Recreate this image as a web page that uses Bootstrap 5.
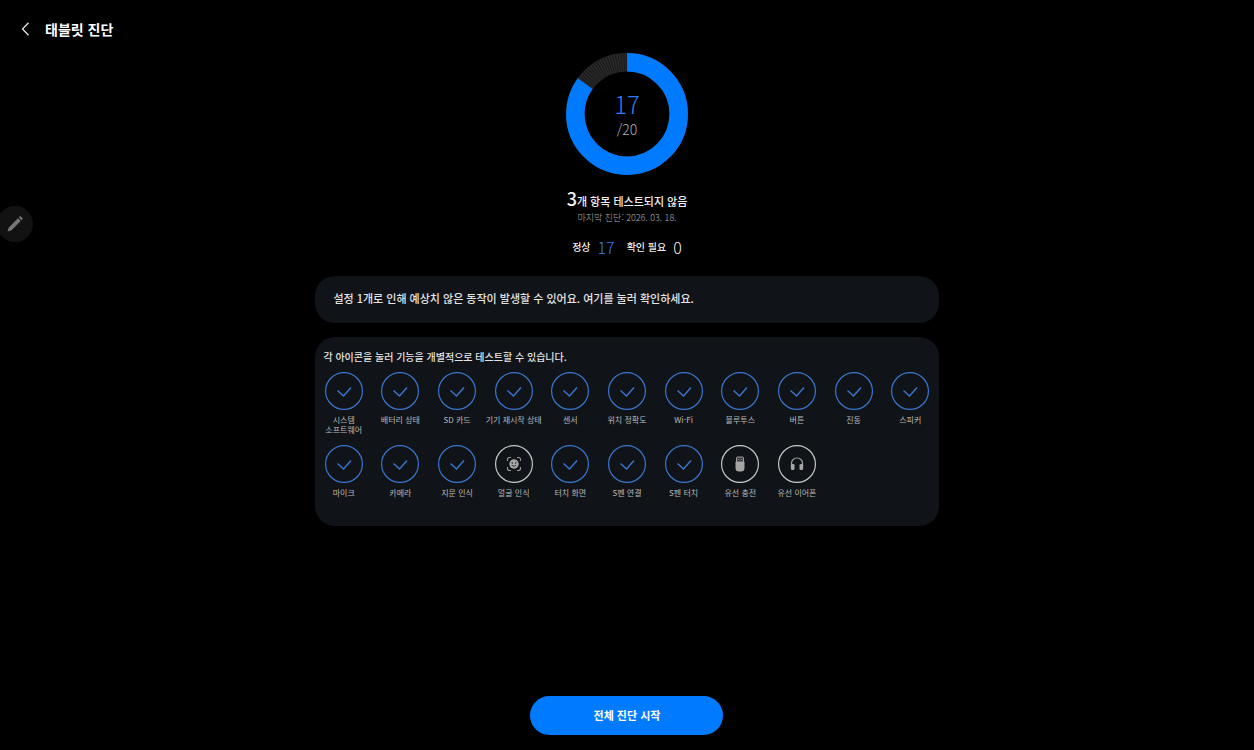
<!DOCTYPE html>
<html lang="ko" data-bs-theme="dark">
<head>
<meta charset="utf-8">
<meta name="viewport" content="width=device-width, initial-scale=1">
<title>태블릿 진단</title>
<link href="https://cdn.jsdelivr.net/npm/bootstrap@5.3.0/dist/css/bootstrap.min.css" rel="stylesheet">
<style>
  body { background: #000; color: #f0f0f0; font-family: "Noto Sans CJK KR", sans-serif; font-size: 11px; line-height: 16px; }
  .app-head { height: 53px; padding: 5px 20px 0 21px; gap: 14px; }
  .app-head h1 { font-size: 14px; line-height: 20px; }
  .back-btn { width: 10px; height: 20px; }
  .pane { width: 49.7%; min-width: 320px; }
  .ring { width: 122px; height: 122px; }
  .ring-value { font-size: 24px; line-height: 24px; font-weight: 300; color: #2f7bf0; }
  .ring-total { font-size: 14px; line-height: 14px; margin-top: 6px; font-weight: 300; color: #b4b4b4; }
  .status { margin-top: 13px; line-height: 20px; font-weight: 500; }
  .status strong { font-size: 18px; font-weight: 500; }
  .last-run { font-size: 9px; line-height: 14px; font-weight: 300; color: #b0b0b0; }
  .counts { margin-top: 11px; font-size: 10px; line-height: 22px; font-weight: 500; }
  .counts dt { font-weight: 500; }
  .counts dd { font-size: 16px; font-weight: 300; }
  .counts dt, .counts dd { margin: 0 7px 0 0; }
  .counts dd:nth-of-type(1) { margin-right: 12px; }
  .counts dd:last-child { margin-right: 0; }
  .accent { color: #3d7df0; }
  .panel { background: #101418; border-radius: 20px; }
  .notice { margin-top: 18px; padding: 14px 18px 17px; font-size: 11px; line-height: 16px; color: #e4e4e4; font-weight: 500; }
  .tests { margin-top: 14px; padding-bottom: 18px; }
  .tests h2 { font-size: 10px; line-height: 16px; font-weight: 500; color: #e4e4e4; padding: 12px 8px 0; margin-bottom: 7px; }
  .test-grid { display: grid; grid-template-columns: repeat(11, minmax(0, 1fr)); row-gap: 10px; }
  .tile { font-size: 8px; line-height: 10px; color: #b8b8b8; min-height: 63px; }
  .tile svg { width: 38px; height: 38px; margin-bottom: 5px; fill: none; color: #3a76d0; }
  .tile.todo svg { color: #c8c8c8; }
  .start-btn { width: 193px; height: 39px; font-size: 11px; font-weight: 700; background: #007bff; color: #fff; margin-bottom: 15px; }
  .start-btn:hover { background: #2490ff; color: #fff; }
  .pen-btn { left: -3px; top: 206px; width: 36px; height: 36px; background: #121212; }
  @media (max-width: 1000px) {
    .pane { width: 92%; }
    .test-grid { grid-template-columns: repeat(auto-fill, minmax(56px, 1fr)); }
  }
</style>
</head>
<body>
<svg class="d-none" aria-hidden="true">
  <symbol id="ok" viewBox="0 0 38 38">
    <circle cx="19" cy="19" r="18.4" stroke="currentColor" stroke-width="1.2"/>
    <path d="M12.5 18.500l6 5.500 7.500-8.500" stroke="currentColor" stroke-width="1.4"/>
  </symbol>
  <symbol id="face" viewBox="0 0 38 38">
    <circle cx="19" cy="19" r="18.400" stroke="currentColor" stroke-width="1.2"/>
    <path d="M12.500 16v-1.500a2 2 0 0 1 2-2H16M22 12.500h1.500a2 2 0 0 1 2 2V16M25.500 22v1.500a2 2 0 0 1-2 2H22M16 25.500h-1.500a2 2 0 0 1-2-2V22" stroke="#999" stroke-width="1.1"/>
    <circle cx="19" cy="19" r="4.700" fill="#a6a6a6"/>
    <circle cx="17.300" cy="18" r=".7" fill="#101418"/><circle cx="20.700" cy="18" r=".7" fill="#101418"/>
    <path d="M16.800 20.300q2.200 2 4.400 0" stroke="#101418" stroke-width=".8"/>
  </symbol>
  <symbol id="usb" viewBox="0 0 38 38">
    <circle cx="19" cy="19" r="18.400" stroke="currentColor" stroke-width="1.2"/>
    <path d="M15.500 17v-4q0-1 1-1h5q1 0 1 1v4" fill="#3a3d40" stroke="#a0a0a0"/>
    <path d="M17.200 14.500h1M19.800 14.500h1" stroke="#a0a0a0"/>
    <path d="M14.500 17.500q0-1 1-1h7q1 0 1 1v5.500q0 3.500-3.500 3.500h-2q-3.500 0-3.500-3.500z" fill="#a6a6a6"/>
  </symbol>
  <symbol id="phones" viewBox="0 0 38 38">
    <circle cx="19" cy="19" r="18.400" stroke="currentColor" stroke-width="1.2"/>
    <path d="M13.500 22v-4a5.500 5 0 0 1 11 0v4" stroke="#a0a0a0" stroke-width="1.2"/>
    <rect x="12.900" y="19" width="3.600" height="6" rx="1.300" fill="#a6a6a6"/>
    <rect x="21.500" y="19" width="3.600" height="6" rx="1.300" fill="#a6a6a6"/>
  </symbol>
</svg>

<div class="d-flex flex-column min-vh-100 position-relative overflow-hidden">
  <header class="app-head d-flex align-items-center">
    <button type="button" class="back-btn btn p-0 border-0 d-flex align-items-center" aria-label="뒤로">
      <svg width="10" height="14" viewBox="0 0 10 14" fill="none" stroke="#e6e6e6" stroke-width="1.3"><path d="M7.500.7L1.500 7l6 6.300"/></svg>
    </button>
    <h1 class="m-0 fw-bold">태블릿 진단</h1>
  </header>

  <main class="pane mx-auto d-flex flex-column flex-grow-1">
    <section class="d-flex flex-column align-items-center text-center">
      <div class="ring position-relative">
        <svg class="d-block" width="122" height="122" viewBox="0 0 122 122" fill="none" stroke-width="18.500">
          <g transform="rotate(-90 61 61)">
            <circle cx="61" cy="61" r="51.700" stroke="#2a2a2a"/>
            <circle cx="61" cy="61" r="51.700" stroke="#151515" pathLength="400" stroke-dasharray="1 2"/>
            <circle cx="61" cy="61" r="51.700" stroke="#007bff" pathLength="100" stroke-dasharray="85 15"/>
          </g>
        </svg>
        <div class="position-absolute top-0 start-0 w-100 h-100 d-flex flex-column align-items-center justify-content-center">
          <span class="ring-value">17</span>
          <span class="ring-total">/20</span>
        </div>
      </div>
      <p class="status mb-0"><strong>3</strong>개 항목 테스트되지 않음</p>
      <p class="last-run mb-0">마지막 진단: 2026. 03. 18.</p>
      <dl class="counts d-flex align-items-center mb-0">
        <dt>정상</dt><dd class="accent">17</dd>
        <dt>확인 필요</dt><dd>0</dd>
      </dl>
    </section>

    <button type="button" class="notice panel btn border-0 w-100 text-start">설정 1개로 인해 예상치 않은 동작이 발생할 수 있어요. 여기를 눌러 확인하세요.</button>

    <section class="tests panel">
      <h2>각 아이콘을 눌러 기능을 개별적으로 테스트할 수 있습니다.</h2>
      <div class="test-grid">
        <button type="button" class="tile btn p-0 border-0 d-flex flex-column align-items-center"><svg><use href="#ok"/></svg><span>시스템<br>소프트웨어</span></button>
        <button type="button" class="tile btn p-0 border-0 d-flex flex-column align-items-center"><svg><use href="#ok"/></svg><span>배터리 상태</span></button>
        <button type="button" class="tile btn p-0 border-0 d-flex flex-column align-items-center"><svg><use href="#ok"/></svg><span>SD 카드</span></button>
        <button type="button" class="tile btn p-0 border-0 d-flex flex-column align-items-center"><svg><use href="#ok"/></svg><span>기기 재시작 상태</span></button>
        <button type="button" class="tile btn p-0 border-0 d-flex flex-column align-items-center"><svg><use href="#ok"/></svg><span>센서</span></button>
        <button type="button" class="tile btn p-0 border-0 d-flex flex-column align-items-center"><svg><use href="#ok"/></svg><span>위치 정확도</span></button>
        <button type="button" class="tile btn p-0 border-0 d-flex flex-column align-items-center"><svg><use href="#ok"/></svg><span>Wi-Fi</span></button>
        <button type="button" class="tile btn p-0 border-0 d-flex flex-column align-items-center"><svg><use href="#ok"/></svg><span>블루투스</span></button>
        <button type="button" class="tile btn p-0 border-0 d-flex flex-column align-items-center"><svg><use href="#ok"/></svg><span>버튼</span></button>
        <button type="button" class="tile btn p-0 border-0 d-flex flex-column align-items-center"><svg><use href="#ok"/></svg><span>진동</span></button>
        <button type="button" class="tile btn p-0 border-0 d-flex flex-column align-items-center"><svg><use href="#ok"/></svg><span>스피커</span></button>
        <button type="button" class="tile btn p-0 border-0 d-flex flex-column align-items-center"><svg><use href="#ok"/></svg><span>마이크</span></button>
        <button type="button" class="tile btn p-0 border-0 d-flex flex-column align-items-center"><svg><use href="#ok"/></svg><span>카메라</span></button>
        <button type="button" class="tile btn p-0 border-0 d-flex flex-column align-items-center"><svg><use href="#ok"/></svg><span>지문 인식</span></button>
        <button type="button" class="tile todo btn p-0 border-0 d-flex flex-column align-items-center"><svg><use href="#face"/></svg><span>얼굴 인식</span></button>
        <button type="button" class="tile btn p-0 border-0 d-flex flex-column align-items-center"><svg><use href="#ok"/></svg><span>터치 화면</span></button>
        <button type="button" class="tile btn p-0 border-0 d-flex flex-column align-items-center"><svg><use href="#ok"/></svg><span>S펜 연결</span></button>
        <button type="button" class="tile btn p-0 border-0 d-flex flex-column align-items-center"><svg><use href="#ok"/></svg><span>S펜 터치</span></button>
        <button type="button" class="tile todo btn p-0 border-0 d-flex flex-column align-items-center"><svg><use href="#usb"/></svg><span>유선 충전</span></button>
        <button type="button" class="tile todo btn p-0 border-0 d-flex flex-column align-items-center"><svg><use href="#phones"/></svg><span>유선 이어폰</span></button>
      </div>
    </section>

    <button type="button" class="start-btn btn border-0 rounded-pill p-0 mt-auto align-self-center">전체 진단 시작</button>
  </main>

  <button type="button" class="pen-btn btn p-0 border-0 rounded-circle position-absolute d-flex align-items-center justify-content-center" aria-label="펜">
    <svg width="18" height="18" viewBox="0 0 18 18" fill="#777"><path d="M1.500 16.500l1.300-4L12 3.300l2.700 2.700-9.200 9.200zM12.800 2.500l.9-.9q.6-.5 1.200 0l1.500 1.500q.5.600 0 1.200l-.9.900z"/></svg>
  </button>
</div>
<script src="https://cdn.jsdelivr.net/npm/bootstrap@5.3.0/dist/js/bootstrap.bundle.min.js"></script>
</body>
</html>
